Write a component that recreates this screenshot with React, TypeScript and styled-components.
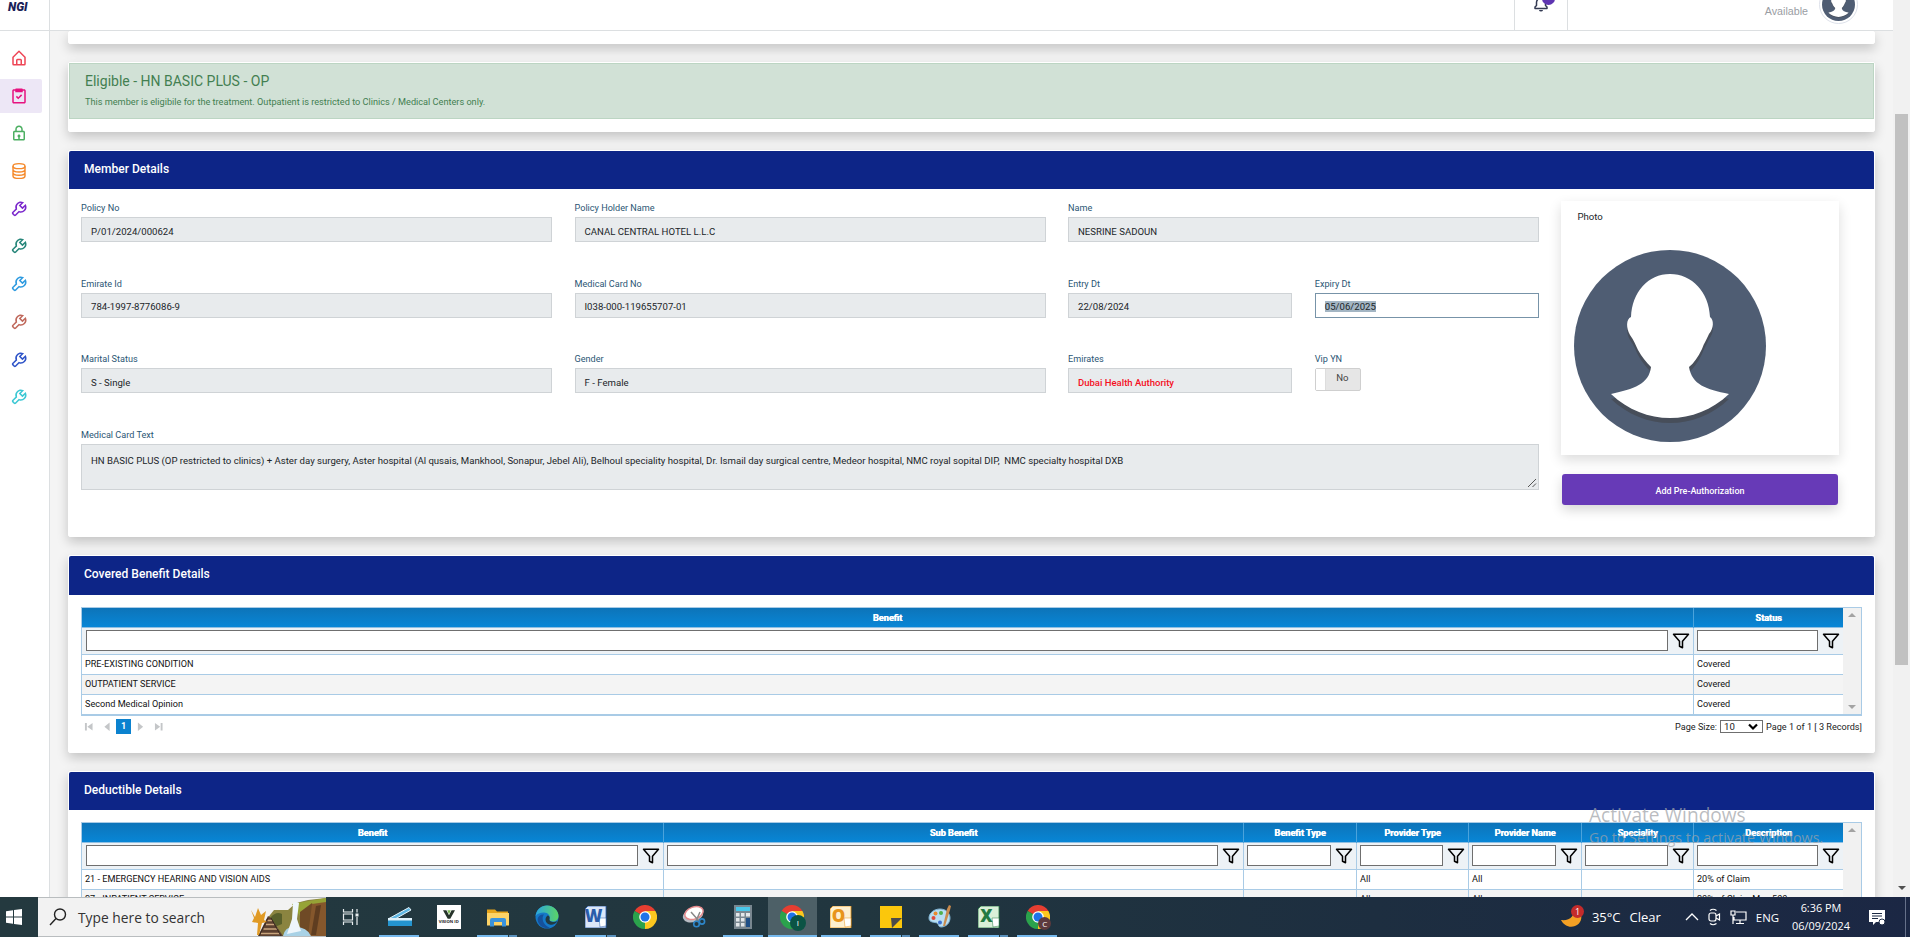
import { ReactNode } from 'react';
import { BiBell, BiHomeAlt, BiLock, BiTask, BiWrench } from 'react-icons/bi';
import { FiFilter } from 'react-icons/fi';
import styled, { createGlobalStyle, css } from 'styled-components';

const COLORS = {
	navy: '#0d2587',
	line: '#a9cbe6',
	label: '#2b5674',
	slate: '#4f5d73',
	purple: '#673ab7',
};

const MENU: { icon: ReactNode; color: string; active?: boolean }[] = [
	{ icon: <BiHomeAlt />, color: '#ee4555' },
	{ icon: <BiTask />, color: '#e6127f', active: true },
	{ icon: <BiLock />, color: '#4caf62' },
	{ icon: <DiscsIcon />, color: '#f58a2c' },
	{ icon: <BiWrench />, color: '#7b28cc' },
	{ icon: <BiWrench />, color: '#27867a' },
	{ icon: <BiWrench />, color: '#2f9be0' },
	{ icon: <BiWrench />, color: '#c0695c' },
	{ icon: <BiWrench />, color: '#2f54c8' },
	{ icon: <BiWrench />, color: '#3cc8d4' },
];

const MEDICAL_TEXT =
	'HN BASIC PLUS (OP restricted to clinics) + Aster day surgery, Aster hospital (Al qusais, Mankhool, Sonapur, Jebel Ali), Belhoul speciality hospital, Dr. Ismail day surgical centre, Medeor hospital, NMC royal sopital DIP,\u00a0 NMC specialty hospital DXB';

const COVERED = {
	template: '1611px 1fr',
	columns: ['Benefit', 'Status'],
	rows: [
		['PRE-EXISTING CONDITION', 'Covered'],
		['OUTPATIENT SERVICE', 'Covered'],
		['Second Medical Opinion', 'Covered'],
	],
};

const DEDUCTIBLE = {
	template: '581px 580px 113px 112px 113px 112px 1fr',
	columns: ['Benefit', 'Sub Benefit', 'Benefit Type', 'Provider Type', 'Provider Name', 'Speciality', 'Description'],
	rows: [
		['21 - EMERGENCY HEARING AND VISION AIDS', '', '', 'All', 'All', '', '20% of Claim'],
		['27 - INPATIENT SERVICE', '', '', 'All', 'All', '', '20% of Claim Max 500'],
	],
};

const App = () => {
	return (
		<Desktop>
			<GlobalStyle />
			<Browser>
				<Page>
					<Header>
						<Logo>NGI</Logo>
						<BellBox>
							<BiBell />
							<BellBadge />
						</BellBox>
						<Profile>
							Available
							<AvatarRing>
								<Avatar />
							</AvatarRing>
						</Profile>
					</Header>
					<Body>
						<Sidebar>
							{MENU.map(({ icon, color, active }, i) => (
								<MenuItem key={i} $color={color} $active={active}>
									{icon}
								</MenuItem>
							))}
						</Sidebar>
						<Main>
							<Card $height={13} />
							<Card $height={70}>
								<Alert>
									<AlertTitle>Eligible - HN BASIC PLUS - OP</AlertTitle>
									<AlertText>
										This member is eligibile for the treatment. Outpatient is restricted to Clinics / Medical Centers only.
									</AlertText>
								</Alert>
							</Card>
							<MemberDetails />
							<Card $height={198}>
								<CardHeader $height={39}>Covered Benefit Details</CardHeader>
								<CardBody>
									<DataGrid {...COVERED} />
									<Pager />
								</CardBody>
							</Card>
							<Card $height={260}>
								<CardHeader>Deductible Details</CardHeader>
								<CardBody>
									<DataGrid {...DEDUCTIBLE} />
								</CardBody>
							</Card>
						</Main>
					</Body>
				</Page>
				<Scrollbar>
					<ScrollThumb />
					<Triangle $down $color="#505050" />
				</Scrollbar>
			</Browser>
			<Watermark>
				<WatermarkTitle>Activate Windows</WatermarkTitle>
				<WatermarkText>Go to Settings to activate Windows.</WatermarkText>
			</Watermark>
			<Taskbar />
		</Desktop>
	);
};

export default App;

const MemberDetails = () => (
	<Card $height={387}>
		<CardHeader>Member Details</CardHeader>
		<MemberBody>
			<Fields>
				<Field label="Policy No" value="P/01/2024/000624" />
				<Field label="Policy Holder Name" value="CANAL CENTRAL HOTEL L.L.C" />
				<Field label="Name" value="NESRINE SADOUN" />
				<Field label="Emirate Id" value="784-1997-8776086-9" />
				<Field label="Medical Card No" value="I038-000-119655707-01" />
				<Field label="Entry Dt" value="22/08/2024" span={1} />
				<FieldBox $span={1}>
					<Label>Expiry Dt</Label>
					<Control $focused>
						<Selected>05/06/2025</Selected>
					</Control>
				</FieldBox>
				<Field label="Marital Status" value="S - Single" />
				<Field label="Gender" value="F - Female" />
				<FieldBox $span={1}>
					<Label>Emirates</Label>
					<Control $alert>Dubai Health Authority</Control>
				</FieldBox>
				<FieldBox $span={1}>
					<Label>Vip YN</Label>
					<Toggle>
						<ToggleKnob />
						No
					</Toggle>
				</FieldBox>
				<FieldBox $span={6}>
					<Label>Medical Card Text</Label>
					<TextArea>
						{MEDICAL_TEXT}
						<Resizer viewBox="0 0 10 10">
							<path d="M1 9 9 1M5.500 9 9 5.500" stroke="#555" fill="none" />
						</Resizer>
					</TextArea>
				</FieldBox>
			</Fields>
			<Side>
				<PhotoCard>
					<PhotoTitle>Photo</PhotoTitle>
					<Avatar />
				</PhotoCard>
				<AuthButton>Add Pre-Authorization</AuthButton>
			</Side>
		</MemberBody>
	</Card>
);

const Field = ({ label, value, span = 2 }: { label: string; value: string; span?: number }) => (
	<FieldBox $span={span}>
		<Label>{label}</Label>
		<Control>{value}</Control>
	</FieldBox>
);

interface IDataGridProps {
	template: string;
	columns: string[];
	rows: string[][];
}

const DataGrid = ({ template, columns, rows }: IDataGridProps) => (
	<GridFrame>
		<GridTable>
			<GridHead $template={template}>
				{columns.map((name) => (
					<HeadCell key={name}>{name}</HeadCell>
				))}
			</GridHead>
			<GridFilters $template={template}>
				{columns.map((name) => (
					<FilterCell key={name}>
						<FilterInput />
						<FiFilter />
					</FilterCell>
				))}
			</GridFilters>
			{rows.map((row, i) => (
				<GridRow key={i} $template={template} $odd={i % 2 === 1}>
					{row.map((cell, j) => (
						<Cell key={j}>{cell}</Cell>
					))}
				</GridRow>
			))}
		</GridTable>
		<GridScroll>
			<Triangle $color="#a3a3a3" />
			<Triangle $down $color="#a3a3a3" />
		</GridScroll>
	</GridFrame>
);

const Pager = () => (
	<PagerRow>
		<PagerIcon viewBox="0 0 10 10">
			<path d="M1 1h2v8H1zM9 1v8L3.500 5z" />
		</PagerIcon>
		<PagerIcon viewBox="0 0 10 10">
			<path d="M8 0.500v9L2.500 5z" />
		</PagerIcon>
		<PagerCurrent>1</PagerCurrent>
		<PagerIcon viewBox="0 0 10 10">
			<path d="M2 0.500v9L7.500 5z" />
		</PagerIcon>
		<PagerIcon viewBox="0 0 10 10">
			<path d="M7 1h2v8H7zM1 1v8L6.500 5z" />
		</PagerIcon>
		<PagerInfo>
			Page Size:
			<PageSize>
				10
				<svg width="10" height="8" viewBox="0 0 10 8">
					<path d="M1 1.500 5 5.500 9 1.500" fill="none" stroke="#000" strokeWidth="2.200" />
				</svg>
			</PageSize>
			Page 1 of 1 [ 3 Records]
		</PagerInfo>
	</PagerRow>
);

const Taskbar = () => (
	<TaskbarRow>
		<StartButton>
			<svg width="16" height="16" viewBox="0 0 16 16" fill="#fff">
				<path d="M0 2.200 7 1.200V7.500H0zM8 1.100 16 0V7.500H8zM0 8.500H7V14.800L0 13.800zM8 8.500H16V16L8 14.900z" />
			</svg>
		</StartButton>
		<SearchBox>
			<svg width="18" height="18" viewBox="0 0 18 18" fill="none" stroke="#222" strokeWidth="1.400">
				<circle cx="11" cy="6.500" r="5.500" />
				<path d="M7 10.500 1 17" />
			</svg>
			Type here to search
			<Waterfall />
		</SearchBox>
		<TaskSlot>
			<svg width="17" height="16" viewBox="0 0 17 16" fill="none" stroke="#e8edef" strokeWidth="1.200">
				<path d="M1.500 0v3h9V0M1.500 16v-3h9v3M1.500 5h9v6h-9zM15 0v3.500M15 8v8" />
				<path d="M13.500 4.500h3v3h-3z" fill="#e8edef" stroke="none" />
			</svg>
		</TaskSlot>
		<TaskSlot $open>
			<svg width="26" height="20" viewBox="0 0 26 20">
				<path d="M2 11.500 22 .500l2 2.500L9 11.500z" fill="#5eb6e2" stroke="#e4f4fb" />
				<path d="M1 11h24v3H1z" fill="#dff1fa" />
				<path d="M1 13.500h24v5.500H1z" fill="#2494cf" />
			</svg>
		</TaskSlot>
		<TaskSlot>
			<VisionLogo>
				<svg width="12" height="9" viewBox="0 0 14 10">
					<path d="M0 0h4l3 6 3-6h4L8.500 10h-3z" fill="#26332a" />
					<path d="M5 0h4L7 5z" fill="#79b752" />
				</svg>
				VISION ID
			</VisionLogo>
		</TaskSlot>
		<TaskSlot $open $stacked>
			<svg width="22" height="19" viewBox="0 0 22 19">
				<path d="M0 1.500h8l2 2h11v4H0z" fill="#e6a41a" />
				<path d="M0 5h22v12.500H0z" fill="#fdd367" />
				<path d="M3 18.500V12q0-2 2-2h12q2 0 2 2v6.500h-4V14H7v4.500z" fill="#3a93dd" />
			</svg>
		</TaskSlot>
		<TaskSlot>
			<svg width="24" height="24" viewBox="0 0 24 24">
				<defs>
					<linearGradient id="edgeTop" x1="0" x2="1">
						<stop offset="0" stopColor="#2aa5e0" />
						<stop offset="1" stopColor="#5cd565" />
					</linearGradient>
				</defs>
				<circle cx="12" cy="12" r="11.500" fill="#1579c8" />
				<path d="M.600 11C1.500 4.500 6.500.500 12 .500 19 .500 23.500 6 23.500 11c0 3.500-2.500 5.500-5.500 5.500s-4-1-3.500-2.500C16 11 13 7.500 9 7.500 5 7.500 2 9 .600 11z" fill="url(#edgeTop)" />
				<path d="M9 9.500C6 13 8 20 15 22.800 9 24.500 2.500 20 2.600 14 3 11 6 9 9 9.500z" fill="#15519c" />
				<path d="M14.500 14c-.700 2.500 4 4.200 8 2-2 3.200-5 4.300-8 3.500-4-1-5.500-6-2-9 1.700 0 2.500 2 2 3.500z" fill="#223a42" />
			</svg>
		</TaskSlot>
		<TaskSlot $open $stacked>
			<OfficeIcon letter="W" color="#2a5caa" tint="#dbe7f8" />
		</TaskSlot>
		<TaskSlot>
			<ChromeIcon />
		</TaskSlot>
		<TaskSlot>
			<svg width="24" height="24" viewBox="0 0 24 24">
				<ellipse cx="11" cy="10" rx="10.500" ry="7" fill="#b7bcc4" transform="rotate(-20 11 10)" />
				<ellipse cx="12" cy="8" rx="9.500" ry="6" fill="#fff" stroke="#e58a8c" strokeWidth="1.500" transform="rotate(-20 12 8)" />
				<path d="m9 7 8 9M18 7l-4 9" stroke="#888" strokeWidth="1.500" />
				<circle cx="14.500" cy="19" r="2.800" fill="none" stroke="#2d86c9" strokeWidth="1.600" />
				<circle cx="20" cy="16.500" r="2.600" fill="none" stroke="#2d86c9" strokeWidth="1.600" />
			</svg>
		</TaskSlot>
		<TaskSlot $open>
			<svg width="18" height="24" viewBox="0 0 18 24">
				<path d="M0 0h18v24H0z" fill="#798790" />
				<path d="M2 2h14v4H2z" fill="#49c7ea" />
				<path d="M2 8h3.500v3.500H2zM7 8h3.500v3.500H7zM12 8h4v3.500h-4zM2 13h3.500v3.500H2zM7 13h3.500v3.500H7zM2 18h3.500v3.500H2zM7 18h3.500v3.500H7z" fill="#e3e7ea" />
				<path d="M12 13h4v9h-4z" fill="#1f4f86" />
			</svg>
		</TaskSlot>
		<TaskSlot $active>
			<ChromeIcon />
			<UserBadge $color="#0b5345">I</UserBadge>
		</TaskSlot>
		<TaskSlot $open>
			<OfficeIcon letter="O" color="#e8951b" tint="#fdf0d0" />
		</TaskSlot>
		<TaskSlot $open $stacked>
			<svg width="22" height="22" viewBox="0 0 22 22">
				<path d="M0 0h22v22H0z" fill="#fbc70c" />
				<path d="M11 12h11L12 22z" fill="#4a4a4a" />
			</svg>
		</TaskSlot>
		<TaskSlot $open>
			<svg width="24" height="24" viewBox="0 0 24 24">
				<path d="M1 13C1 8 6 4 12 4s10 4 10 9-4 9-9 9c-3 0-2-3-4-4s-8 0-8-5z" fill="#b9def2" stroke="#7fb4d4" />
				<circle cx="5.500" cy="13" r="2" fill="#e04a3c" />
				<circle cx="7.500" cy="8.500" r="2" fill="#e98a2e" />
				<circle cx="13" cy="8" r="2" fill="#50b04c" />
				<circle cx="12" cy="17.500" r="2" fill="#3c6fd0" />
				<path d="m15 21 4-17 2-4 2 1-1 4-5 16z" fill="#c98b4d" />
			</svg>
		</TaskSlot>
		<TaskSlot $open $stacked>
			<OfficeIcon letter="X" color="#237a43" tint="#d9efd8" />
		</TaskSlot>
		<TaskSlot $open>
			<ChromeIcon />
			<UserBadge $color="#5d3a3e" $small>
				C
			</UserBadge>
		</TaskSlot>
		<Tray>
			<Weather>
				<svg width="24" height="24" viewBox="0 0 24 24">
					<path d="M14 3c1 8-4 13-13 12 3 6 9 8 14 6 6-2 8-9 5-14-1-2-3-3-6-4z" fill="#f4a024" />
					<circle cx="17.500" cy="6.500" r="6.500" fill="#c42b2b" />
					<text x="17.500" y="10" fontSize="9" fill="#fff" textAnchor="middle">1</text>
				</svg>
				<span>35°C</span>
				<span>Clear</span>
			</Weather>
			<svg width="14" height="8" viewBox="0 0 14 8" fill="none" stroke="#fff" strokeWidth="1.300">
				<path d="m1 7 6-6 6 6" />
			</svg>
			<svg width="13" height="18" viewBox="0 0 13 18" fill="none" stroke="#fff" strokeWidth="1.200">
				<rect x="1" y="5" width="7" height="8" rx="2" />
				<path d="m8 8 3.500-2v6L8 10M2 2.500q3-2.500 6.500 0M2 15.500q3 2.500 6.500 0" />
			</svg>
			<svg width="17" height="15" viewBox="0 0 17 15" fill="none" stroke="#fff" strokeWidth="1.200">
				<path d="M6 2h10v8H4V7M10 10v3.500M6 13.500h8M1 1h4v4H1zM3 5v9" />
			</svg>
			<span>ENG</span>
			<Clock>
				<span>6:36 PM</span>
				<span>06/09/2024</span>
			</Clock>
			<svg width="17" height="17" viewBox="0 0 17 17">
				<path d="M0 1h16v12H7l-3 3v-3H0z" fill="#fff" />
				<path d="M3 4.500h10M3 7h10M3 9.500h6" stroke="#1b2942" strokeWidth="1.200" />
				<circle cx="13" cy="13" r="3" fill="#fff" stroke="#1b2942" />
			</svg>
			<ShowDesktop />
		</Tray>
	</TaskbarRow>
);

const OfficeIcon = ({ letter, color, tint }: { letter: string; color: string; tint: string }) => (
	<svg width="22" height="22" viewBox="0 0 22 22">
		<path d="M3 0h18v22H0V3z" fill={tint} stroke={color} strokeWidth=".8" />
		<path d="M14 12h7v8l-6 1z" fill="#fff" stroke={color} strokeWidth=".5" />
		<text x="8.500" y="16" fontSize="17" fontWeight="800" fontFamily="Open Sans, sans-serif" fill={color} textAnchor="middle">
			{letter}
		</text>
	</svg>
);

const ChromeIcon = () => (
	<svg width="24" height="24" viewBox="0 0 24 24">
		<path d="M12 12 1.600 6A12 12 0 0 1 22.400 6z" fill="#e63e31" />
		<path d="M12 12 22.400 6A12 12 0 0 1 12 24z" fill="#fcc71f" />
		<path d="M12 12V24A12 12 0 0 1 1.600 6z" fill="#2ba24c" />
		<path d="M12 6h10.400L17.200 15 12 24l2-8z" fill="#fcc71f" />
		<path d="M1.600 6 7 15l5 3-1 5-5-3z" fill="#2ba24c" />
		<circle cx="12" cy="12" r="5.800" fill="#fff" />
		<circle cx="12" cy="12" r="4.500" fill="#1f73e8" />
	</svg>
);

const Waterfall = () => (
	<Picture viewBox="0 0 76 38">
		<path d="M16 22 24 12h14l8-7 12-3 18-2v38H14z" fill="#8b8440" />
		<path d="M20 20q6-7 12-4v10l-10 4z" fill="#59602b" />
		<path d="M42 6 76 0v14L64 9 54 24z" fill="#96a336" />
		<path d="M50 14 62 5l4 12-4 21H50z" fill="#6f4a26" />
		<path d="M62 6 76 4v34H58z" fill="#85572c" />
		<path d="m66 8 5-1-5 30h-5z" fill="#5f3d20" />
		<path d="M33 38q2-10 12-9 12 0 16 9z" fill="#a9d2e6" />
		<path d="M43 5q3-2 6 0l-2 16 4 12-14 3 5-15z" fill="#eef6fb" />
		<path d="m8 38 10-20 3 2 12 18z" fill="#5c4130" />
		<path d="M11 35.500h19M13.500 31h14M16 26.500h8.500M17.500 22.500h4.500" fill="none" stroke="#c9a57c" strokeWidth="1.400" />
		<path d="m9 38 9-18M31 38 21 20" fill="none" stroke="#39291f" />
		<path d="m1 12 4 7 3-9 3 7 5-4-2 9 3 2-5 1-3 12H7l1-12-6-1 2-4z" fill="#e09a24" />
	</Picture>
);

function DiscsIcon() {
	return (
		<svg viewBox="0 0 24 24" width="1em" height="1em" fill="none" stroke="currentColor" strokeWidth="1.900">
			<ellipse cx="12" cy="5.500" rx="8" ry="3.300" />
			<path d="M4 5.500v13c0 1.800 3.600 3.300 8 3.300s8-1.500 8-3.300v-13M4 10c0 1.800 3.600 3.300 8 3.300s8-1.500 8-3.300M4 14.300c0 1.800 3.600 3.300 8 3.300s8-1.500 8-3.300" />
		</svg>
	);
}

const PERSON =
	'M96 24C74 24 58 42 57 67C52 69 52 78 56 85C60 90 62 96 64 100C68 107 72 112 77 117C75 134 60 139 37 144C54 160 75 168 96 168C117 168 138 160 155 144C132 139 118 135 115 117C120 113 124 107 128 99C130 93 133 89 135 84C140 78 140 70 136 67C135 42 118 24 96 24Z';

const Avatar = () => (
	<AvatarSvg viewBox="0 0 192 192">
		<circle cx="96" cy="96" r="96" fill={COLORS.slate} />
		<path d={PERSON} transform="translate(0 5)" fill="#474e5a" />
		<path d={PERSON} fill="#fff" />
	</AvatarSvg>
);

const GlobalStyle = createGlobalStyle`
	*, *::before, *::after {
		box-sizing: border-box;
	}
	body {
		margin: 0;
		overflow: hidden;
		font-family: Roboto, sans-serif;
	}
`;

const Desktop = styled.div`
	position: relative;
	display: flex;
	flex-direction: column;
	width: 1910px;
	height: 937px;
	overflow: hidden;
`;

const Browser = styled.div`
	display: flex;
	height: 897px;
	overflow: hidden;
`;

const Page = styled.div`
	flex: 1;
	display: flex;
	flex-direction: column;
	background: #f4f4f4;
`;

const Header = styled.header`
	display: flex;
	flex: none;
	height: 31px;
	overflow: hidden;
	background: #fff;
	border-bottom: 1px solid #dcdfe1;
`;

const Logo = styled.div`
	width: 50px;
	padding-left: 8px;
	border-right: 1px solid #dcdfe1;
	color: #1a2258;
	font-size: 12px;
	font-style: italic;
	font-weight: 900;
	line-height: 14px;
`;

const BellBox = styled.div`
	position: relative;
	width: 54px;
	margin-left: auto;
	border: solid #dcdfe1;
	border-width: 0 1px;
	text-align: center;
	font-size: 18px;
	color: #333a52;

	svg {
		display: block;
		margin: -5px auto 0;
	}
`;

const BellBadge = styled.span`
	position: absolute;
	top: -8px;
	left: 27px;
	width: 13px;
	height: 13px;
	border-radius: 50%;
	background: #5e35b1;
`;

const Profile = styled.div`
	display: flex;
	width: 325px;
	padding-right: 35px;
	justify-content: flex-end;
	gap: 11px;
	color: #9a9da3;
	font: 10.7px/22px 'Liberation Sans', sans-serif;
`;

const AvatarRing = styled.div`
	width: 39px;
	height: 39px;
	margin-top: -15px;
	padding: 2px;
	border: 1px solid #dde1ea;
	border-radius: 50%;
`;

const AvatarSvg = styled.svg`
	display: block;
	width: 100%;
`;

const Body = styled.div`
	display: flex;
	flex: 1;
	min-height: 0;
`;

const Sidebar = styled.nav`
	flex: none;
	display: flex;
	flex-direction: column;
	gap: 3.7px;
	width: 50px;
	padding: 10px 7px 0 0;
	background: #fff;
	border-right: 1px solid #dcdfe1;
`;

const MenuItem = styled.div<{ $color: string; $active?: boolean }>`
	display: flex;
	align-items: center;
	height: 34px;
	padding-left: 10px;
	border-radius: 0 2px 2px 0;
	background: ${({ $active }) => ($active ? '#ede7f6' : 'none')};
	color: ${({ $color }) => $color};
	font-size: 18px;
`;

const Main = styled.main`
	flex: 1;
	display: flex;
	flex-direction: column;
	gap: 18px;
	padding: 0 18px;
	overflow: hidden;
`;

const Card = styled.section<{ $height: number }>`
	flex: none;
	height: ${({ $height }) => $height}px;
	border: 1px solid #fff;
	border-radius: 2px;
	background: #fff;
	box-shadow: 0 5px 12px rgba(0, 0, 0, 0.2);
`;

const Alert = styled.div`
	height: 56px;
	padding: 7px 15px;
	border: 1px solid #bcd5c3;
	background: #d1e1d6;
	color: #437f51;
`;

const AlertTitle = styled.div`
	font-size: 14px;
	line-height: 20px;
`;

const AlertText = styled.div`
	font-size: 9.16px;
	line-height: 22px;
`;

const CardHeader = styled.h2<{ $height?: number }>`
	height: ${({ $height = 38 }) => $height}px;
	margin: 0;
	padding-left: 15px;
	border-radius: 2px 2px 0 0;
	background: ${COLORS.navy};
	color: #fff;
	font-size: 12.05px;
	font-weight: 500;
	line-height: 36px;
`;

const CardBody = styled.div`
	padding: 12px 12px 0;
	font-size: 9.12px;
`;

const MemberBody = styled.div`
	display: flex;
	padding: 10px 35px 0 12px;
`;

const Fields = styled.div`
	display: grid;
	grid-template-columns: repeat(6, 1fr);
	gap: 32.5px 22.5px;
	align-content: start;
	width: 1458px;
`;

const FieldBox = styled.div<{ $span: number }>`
	grid-column: span ${({ $span }) => $span};
`;

const Label = styled.div`
	color: ${COLORS.label};
	font-size: 9.12px;
	line-height: 18px;
`;

const Control = styled.div<{ $focused?: boolean; $alert?: boolean }>`
	height: 25px;
	padding: 1.5px 9px 0;
	border: 1px solid #cfd3d6;
	background: #e8ebed;
	color: #212529;
	font-size: 9.6px;
	line-height: 23px;
	${({ $focused }) =>
		$focused &&
		css`
			border-color: #7793a8;
			background: #fff;
		`}
	${({ $alert }) =>
		$alert &&
		css`
			color: #f5111f;
			font-size: 9.52px;
			font-weight: 500;
		`}
`;

const Selected = styled.span`
	background: #a3b5c3;
`;

const TextArea = styled.div`
	position: relative;
	height: 46px;
	padding: 4px 9px;
	border: 1px solid #cfd3d6;
	background: #e8ebed;
	color: #212529;
	font-size: 9.6px;
	line-height: 23px;
	white-space: pre;
`;

const Resizer = styled.svg`
	position: absolute;
	right: 1px;
	bottom: 1px;
	width: 10px;
	height: 10px;
`;

const Toggle = styled.div`
	display: flex;
	width: 46px;
	height: 23px;
	border: 1px solid #cfcfcf;
	border-radius: 2px;
	background: #e6e6e6;
	color: #444;
	font-size: 9.6px;
	line-height: 18px;
`;

const ToggleKnob = styled.span`
	width: 10px;
	margin-right: 10.5px;
	border-right: 1px solid #ddd;
	background: #fff;
`;

const Side = styled.div`
	width: 278px;
	margin: 2px 0 0 22px;
`;

const PhotoCard = styled.div`
	height: 254px;
	padding: 6px 73px 0 13px;
	background: #fff;
	box-shadow: 0 5px 12px rgba(0, 0, 0, 0.14);
`;

const PhotoTitle = styled.div`
	height: 43px;
	padding-left: 3.5px;
	color: #212529;
	font-size: 9.6px;
	line-height: 20px;
`;

const AuthButton = styled.button`
	display: block;
	width: 276px;
	height: 31px;
	margin: 19px 1px 0;
	padding: 2px 0 0;
	border: 0;
	border-radius: 3px;
	background: ${COLORS.purple};
	box-shadow: 0 5px 12px rgba(0, 0, 0, 0.16);
	color: #fff;
	font: 500 8.96px Roboto, sans-serif;
`;

const GridFrame = styled.div`
	display: flex;
	border: 1px solid ${COLORS.line};
	border-bottom-width: 2px;
`;

const GridTable = styled.div`
	flex: 1;
`;

const columns = css<{ $template: string }>`
	display: grid;
	grid-template-columns: ${({ $template }) => $template};
`;

const GridHead = styled.div<{ $template: string }>`
	${columns}
	height: 20px;
	border-bottom: 1px solid #8fbfe2;
	background: linear-gradient(#0d74b9, #0886d6);
`;

const HeadCell = styled.div`
	color: #fff;
	font-weight: 700;
	line-height: 20px;
	text-align: center;
	text-shadow: 0.5px 0 #fff;

	& + & {
		border-left: 1px solid #4ba3dc;
	}
`;

const GridFilters = styled.div<{ $template: string }>`
	${columns}
	height: 26px;
	background: #edf2f6;
`;

const FilterCell = styled.div`
	display: flex;
	align-items: flex-start;
	gap: 4px;
	padding: 2px 3px 0 4px;
	font-size: 18px;

	& + & {
		padding-left: 3px;
		border-left: 1px solid ${COLORS.line};
	}

	svg {
		flex: none;
		margin-top: 2px;
	}
`;

const FilterInput = styled.div`
	flex: 1;
	height: 21px;
	border: 1px solid #6f6f6f;
	background: #fff;
`;

const GridRow = styled.div<{ $template: string; $odd: boolean }>`
	${columns}
	height: 20px;
	border-top: 1px solid ${COLORS.line};
	background: ${({ $odd }) => ($odd ? '#f4f4f4' : '#fff')};
`;

const Cell = styled.div`
	padding-left: 3px;
	color: #111;
	line-height: 19.5px;
	white-space: nowrap;

	& + & {
		border-left: 1px solid ${COLORS.line};
	}
`;

const GridScroll = styled.div`
	display: flex;
	flex-direction: column;
	align-items: center;
	justify-content: space-between;
	width: 18px;
	padding: 5px 0;
	background: #f1f1f1;
`;

const Triangle = styled.span<{ $down?: boolean; $color: string }>`
	width: 0;
	height: 0;
	border: solid transparent;
	border-width: ${({ $down }) => ($down ? '4px 4px 0' : '0 4px 4px')};
	border-${({ $down }) => ($down ? 'top' : 'bottom')}-color: ${({ $color }) => $color};
`;

const PagerRow = styled.div`
	display: flex;
	align-items: center;
	height: 15px;
	margin-top: 3px;
	padding-left: 3px;
	gap: 8px;
`;

const PagerIcon = styled.svg`
	width: 9.500px;
	height: 9.500px;
	fill: #c4c6c8;
`;

const PagerCurrent = styled.span`
	width: 15px;
	margin: 0 -3px 0 -3px;
	background: #0b82cf;
	color: #fff;
	font-weight: 700;
	line-height: 15px;
	text-align: center;
`;

const PagerInfo = styled.div`
	display: flex;
	align-items: center;
	gap: 3px;
	margin-left: auto;
	color: #222;
`;

const PageSize = styled.span`
	display: flex;
	align-items: center;
	justify-content: space-between;
	width: 43px;
	height: 13px;
	padding: 0 4px 0 3px;
	border: 1px solid #6f6f6f;
	font-size: 9.6px;
`;

const Scrollbar = styled.div`
	display: flex;
	flex-direction: column;
	justify-content: space-between;
	align-items: center;
	width: 17px;
	padding: 114px 0 7px;
	background: #f1f1f1;
`;

const ScrollThumb = styled.div`
	width: 13px;
	height: 551px;
	background: #c1c1c1;
`;

const Watermark = styled.div`
	position: absolute;
	left: 1589px;
	top: 803px;
	color: rgba(160, 163, 168, 0.72);
	font-family: 'Open Sans', sans-serif;
	white-space: nowrap;
`;

const WatermarkTitle = styled.div`
	font-size: 19.1px;
	line-height: 24px;
`;

const WatermarkText = styled.div`
	font-size: 14.3px;
	line-height: 22px;
`;

const TaskbarRow = styled.footer`
	display: flex;
	height: 40px;
	background: linear-gradient(90deg, #24393f 0%, #21363f 45%, #1d2e40 72%, #1b2744 100%);
	color: #fff;
	font-family: 'Open Sans', sans-serif;
`;

const StartButton = styled.div`
	display: flex;
	align-items: center;
	width: 38px;
	padding-left: 6px;
`;

const SearchBox = styled.div`
	display: flex;
	align-items: center;
	gap: 11px;
	width: 288px;
	padding-left: 11px;
	border: solid #b9bdbf;
	border-width: 1px 0;
	background: #f2f2f2;
	color: #333;
	font-size: 13.8px;
`;

const Picture = styled.svg`
	width: 76px;
	height: 38px;
	margin-left: auto;
`;

const TaskSlot = styled.div<{ $open?: boolean; $active?: boolean; $stacked?: boolean }>`
	position: relative;
	display: flex;
	align-items: center;
	justify-content: center;
	width: 49.1px;
	${({ $active }) =>
		$active &&
		css`
			background: #4d6067;
		`}

	&::after {
		content: '';
		position: absolute;
		bottom: 0;
		left: ${({ $active }) => ($active ? 0 : 4)}px;
		right: ${({ $active }) => ($active ? 0 : 5)}px;
		height: ${({ $open, $active }) => ($open || $active ? 2 : 0)}px;
		background: ${({ $stacked }) => ($stacked ? 'linear-gradient(90deg, #76b9ed 31px, #24393f 31px 32px, #5b91bd 32px)' : '#76b9ed')};
	}
`;

const VisionLogo = styled.div`
	display: flex;
	flex-direction: column;
	align-items: center;
	justify-content: center;
	width: 24px;
	height: 24px;
	background: #fff;
	color: #222;
	font-size: 4.2px;
	font-weight: 700;
	line-height: 6px;
	white-space: nowrap;
`;

const UserBadge = styled.span<{ $color: string; $small?: boolean }>`
	position: absolute;
	left: ${({ $small }) => ($small ? 25 : 22)}px;
	top: ${({ $small }) => ($small ? 20 : 18)}px;
	width: ${({ $small }) => ($small ? 13 : 16)}px;
	border-radius: 50%;
	background: ${({ $color }) => $color};
	font-size: 8px;
	line-height: ${({ $small }) => ($small ? 13 : 16)}px;
	text-align: center;
`;

const Tray = styled.div`
	display: flex;
	align-items: center;
	gap: 9px;
	margin-left: auto;
	font-size: 11.4px;
`;

const Weather = styled.div`
	display: flex;
	align-items: center;
	gap: 9px;
	margin-right: 15px;
	font-size: 13px;

	svg {
		margin-right: -1px;
	}
`;

const Clock = styled.div`
	display: flex;
	flex-direction: column;
	align-items: center;
	width: 60px;
	margin: 0 9px 0 3px;
	font-size: 10.9px;
	line-height: 18px;
`;

const ShowDesktop = styled.div`
	width: 5px;
	height: 40px;
	margin-left: 10px;
	border-left: 1px solid #66718a;
`;
